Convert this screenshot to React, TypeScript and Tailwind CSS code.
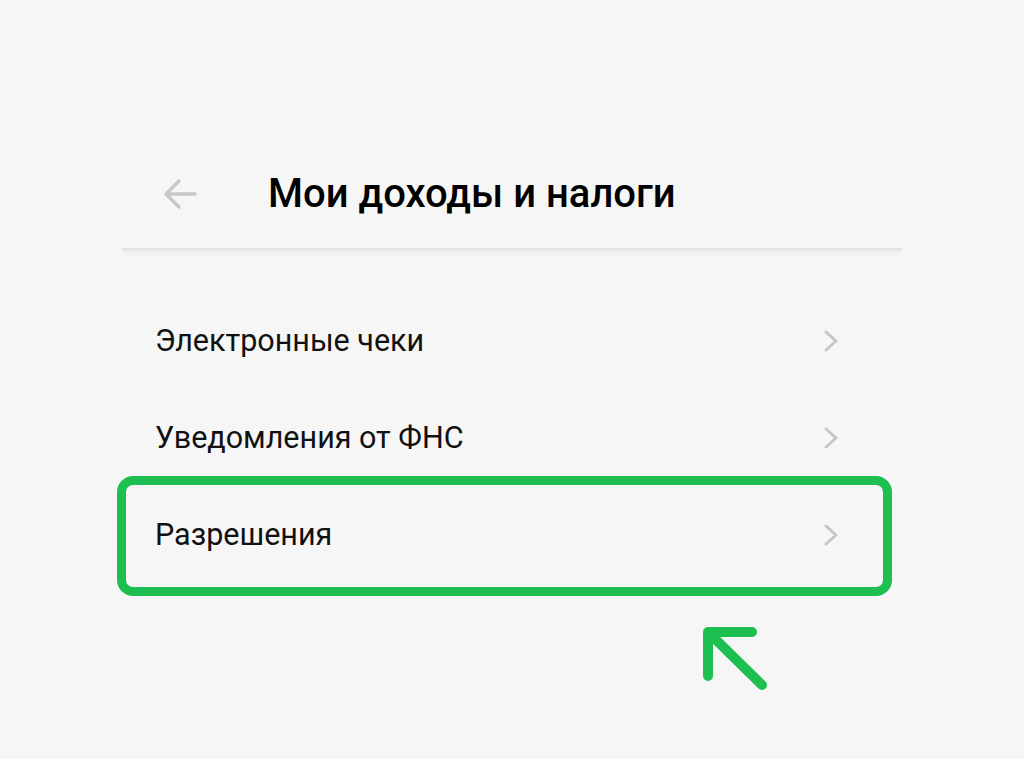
import React from 'react';

const items = ['Электронные чеки', 'Уведомления от ФНС', 'Разрешения'];

const Chevron = () => (
  <svg width="16" height="24" viewBox="0 0 16 24" fill="none">
    <polyline points="3,3 13,12 3,21" stroke="#c6c6c6" strokeWidth="3" strokeLinecap="round" strokeLinejoin="round" />
  </svg>
);

const App: React.FC = () => {
  return (
    <div className="relative w-full h-[759px] bg-[#f6f6f6] overflow-hidden" style={{ fontFamily: 'Roboto, "Noto Sans", sans-serif' }}>
      <div className="ml-[122px] w-[780px] pt-[140px]">
        {/* header */}
        <div className="h-[110px] flex items-center border-b-2 border-[#e4e4e4]">
          <svg className="ml-[40px]" width="36" height="32" viewBox="0 0 36 32" fill="none">
            <path d="M33 16H4M17 3L4 16l13 13" stroke="#c8c8c8" strokeWidth="3.5" strokeLinecap="round" strokeLinejoin="round" />
          </svg>
          <h1 className="ml-[70px] text-[40px] font-medium text-black">Мои доходы и налоги</h1>
        </div>
        <div className="h-[6px] bg-gradient-to-b from-[#ececec] to-[#f6f6f6]" />

        {/* list */}
        <div className="pt-[36px]">
          {items.map((label, i) => (
            <div key={label} className="relative h-[97px] flex items-center justify-between pl-[33px] pr-[63px]">
              <span className="text-[30.5px] text-[#111]">{label}</span>
              <Chevron />
              {i === 2 && (
                <div className="absolute -left-[5px] right-[10px] -top-[10px] -bottom-[13px] border-[9px] border-[#1cbf50] rounded-[16px] pointer-events-none" />
              )}
            </div>
          ))}
        </div>
      </div>

      {/* annotation arrow */}
      <svg className="absolute left-[700px] top-[624px]" width="72" height="72" viewBox="0 0 72 72" fill="none">
        <path d="M8 8h44M8 8v44M8 8l54 53" stroke="#1cbf50" strokeWidth="10" strokeLinecap="round" strokeLinejoin="round" />
      </svg>
    </div>
  );
};

export default App;
